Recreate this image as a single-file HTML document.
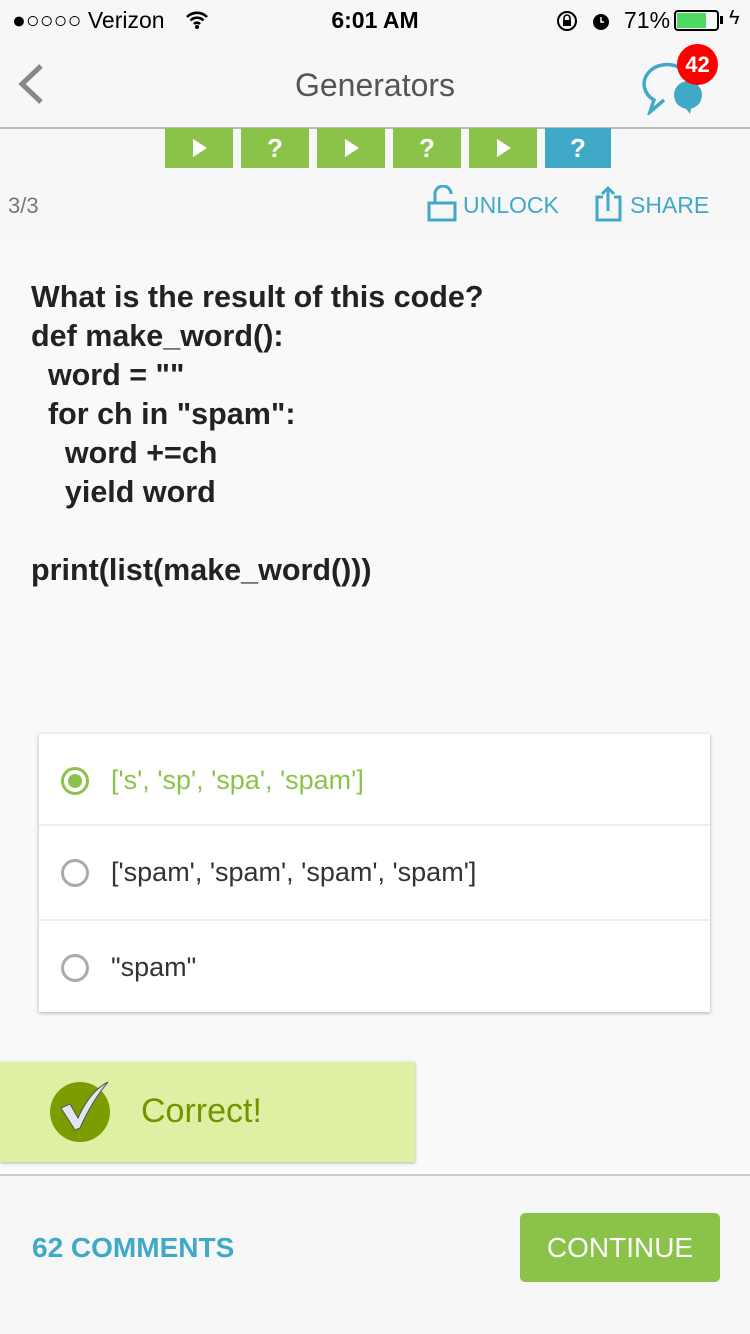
<!DOCTYPE html>
<html><head><meta charset="utf-8"><style>
*{margin:0;padding:0;box-sizing:border-box}
body{width:750px;height:1334px;background:#f7f7f7;font-family:"Liberation Sans",sans-serif;position:relative;overflow:hidden}
.a{position:absolute}
.tile{position:absolute;top:128px;width:68px;height:40px;background:#8bc34a;color:#fff;font-weight:bold;font-size:26px;text-align:center;line-height:40px}
.tri{position:absolute;left:28px;top:11px;width:0;height:0;border-left:14px solid #fff;border-top:9px solid transparent;border-bottom:9px solid transparent}
.q{left:31px;top:278px;font-size:30.5px;line-height:39px;color:#222;font-weight:bold;white-space:pre}
.opt{position:absolute;left:39px;width:671px;height:93px;background:#fff;font-size:27px;color:#333}
.opt .r{position:absolute;left:22px;top:33px;width:28px;height:28px;border:3px solid #aaa;border-radius:50%}
.opt span{position:absolute;left:72px;top:31px}
</style></head><body>
<div class="a" style="left:12px;top:7px;font-size:23px;color:#000">●○○○○ Verizon</div>
<svg class="a" style="left:185px;top:10px" width="24" height="20" viewBox="0 0 24 20"><path d="M2 7a14 14 0 0 1 20 0M5.5 10.5a9 9 0 0 1 13 0M9 14a4 4 0 0 1 6 0" stroke="#000" stroke-width="2.6" fill="none"/><circle cx="12" cy="17" r="2" fill="#000"/></svg>
<div class="a" style="left:0;width:750px;top:7px;text-align:center;font-size:23px;font-weight:bold">6:01 AM</div>
<svg class="a" style="left:556px;top:9px" width="58" height="24"><circle cx="11" cy="12" r="9" stroke="#000" stroke-width="2" fill="none"/><rect x="7" y="11" width="8" height="6" fill="#000"/><path d="M8 11V9a3 3 0 0 1 6 0v2" stroke="#000" stroke-width="1.6" fill="none"/><circle cx="45" cy="13" r="8" fill="#000"/><path d="M45 8v5h3" stroke="#fff" stroke-width="1.5" fill="none"/></svg>
<div class="a" style="left:624px;top:7px;font-size:23px">71%</div>
<div class="a" style="left:674px;top:10px;width:45px;height:21px;border:2px solid #000;border-radius:4px;padding:1px"><div style="width:29px;height:15px;background:#4cd964"></div></div>
<div class="a" style="left:720px;top:16px;width:3px;height:8px;background:#000"></div>
<div class="a" style="left:729px;top:7px;font-size:20px">ϟ</div>
<svg class="a" style="left:14px;top:62px" width="30" height="44"><path d="M27 4 L8 22 L27 40" stroke="#888" stroke-width="5" fill="none"/></svg>
<div class="a" style="left:0;width:750px;top:67px;text-align:center;font-size:32px;color:#555">Generators</div>
<svg class="a" style="left:640px;top:60px" width="70" height="55"><path d="M40 8 A20 17 0 1 0 14 40 L10 52 L24 40" stroke="#40a9c8" stroke-width="3.5" fill="none"/><circle cx="48" cy="35" r="14" fill="#40a9c8"/><path d="M44 46 L50 54 L52 44z" fill="#40a9c8"/></svg>
<div class="a" style="left:677px;top:44px;width:41px;height:41px;border-radius:50%;background:#f00;color:#fff;font-weight:bold;font-size:22px;text-align:center;line-height:41px">42</div>
<div class="a" style="left:0;top:127px;width:750px;height:2px;background:#bbb"></div>
<div class="tile" style="left:165px"><div class="tri"></div></div><div class="tile" style="left:241px">?</div><div class="tile" style="left:317px"><div class="tri"></div></div><div class="tile" style="left:393px">?</div><div class="tile" style="left:469px"><div class="tri"></div></div><div class="tile" style="left:545px;background:#40a9c8;width:66px">?</div>
<div class="a" style="left:8px;top:193px;font-size:22px;color:#777">3/3</div>
<svg class="a" style="left:427px;top:185px" width="34" height="38"><path d="M8 18 V9 a8 8 0 0 1 16 0" stroke="#40a9c8" stroke-width="3" fill="none"/><rect x="2" y="18" width="26" height="17" stroke="#40a9c8" stroke-width="3" fill="none"/></svg>
<div class="a" style="left:463px;top:192px;font-size:23px;color:#40a9c8">UNLOCK</div>
<svg class="a" style="left:594px;top:185px" width="32" height="38"><path d="M9 12 H3 V35 H26 V12 H20 M14 26 V3 M8 9 L14 3 L20 9" stroke="#40a9c8" stroke-width="3" fill="none"/></svg>
<div class="a" style="left:630px;top:192px;font-size:23px;color:#40a9c8">SHARE</div>
<div class="a" style="left:0;top:238px;width:750px;height:936px;background:#f9f9f9"></div>
<div class="a q">What is the result of this code?
def make_word():
  word = ""
  for ch in "spam":
    word +=ch
    yield word

print(list(make_word()))</div>
<div class="a" style="left:39px;top:734px;width:671px;height:278px;box-shadow:0 1px 4px rgba(0,0,0,.3);background:#eee"></div>
<div class="opt" style="top:734px;height:90px;color:#8bc34a"><div class="r" style="border-color:#8bc34a"><div style="margin:4px;width:14px;height:14px;border-radius:50%;background:#8bc34a"></div></div><span>['s', 'sp', 'spa', 'spam']</span></div>
<div class="opt" style="top:826px"><div class="r"></div><span>['spam', 'spam', 'spam', 'spam']</span></div>
<div class="opt" style="top:921px;height:91px"><div class="r"></div><span>"spam"</span></div>
<div class="a" style="left:0;top:1062px;width:415px;height:100px;background:#dff0a4;box-shadow:0 1px 3px rgba(0,0,0,.3)"></div>
<div class="a" style="left:50px;top:1082px;width:60px;height:60px;border-radius:50%;background:#7a9e00"></div>
<svg class="a" style="left:58px;top:1080px" width="52" height="56"><path d="M3 28 L12 24 L20 38 C28 20 38 8 50 2 C40 14 30 30 22 48 L17 50z" fill="#e3e6ea" stroke="#555" stroke-width="1"/></svg>
<div class="a" style="left:141px;top:1092px;font-size:34px;color:#6e9600">Correct!</div>
<div class="a" style="left:0;top:1174px;width:750px;height:2px;background:#ccc"></div>
<div class="a" style="left:32px;top:1232px;font-size:28px;color:#40a9c8;font-weight:bold">62 COMMENTS</div>
<div class="a" style="left:520px;top:1213px;width:200px;height:69px;background:#8bc34a;border-radius:5px;color:#fff;font-size:28px;text-align:center;line-height:69px">CONTINUE</div>
</body></html>
